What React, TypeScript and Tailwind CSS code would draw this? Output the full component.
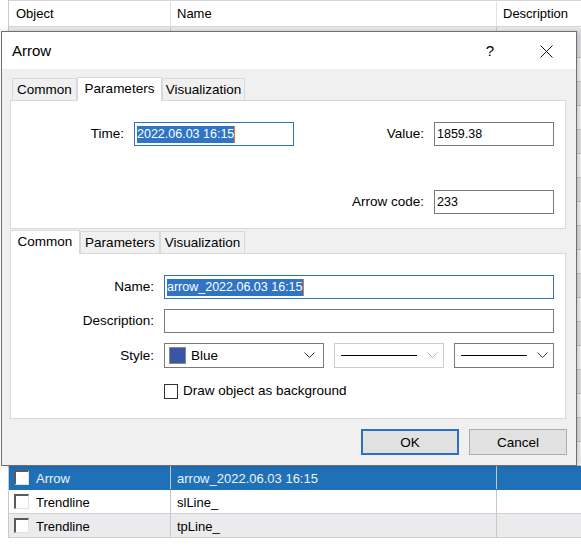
import React from 'react';

const Chevron = ({ light = false }: { light?: boolean }) => (
  <svg width="11" height="7" viewBox="0 0 11 7" className="shrink-0">
    <polyline points="0.5,0.5 5.5,5.5 10.5,0.5" fill="none" stroke={light ? '#b4b4b4' : '#3c3c3c'} strokeWidth="1" />
  </svg>
);

const ListCheck = () => (
  <div className="w-[15px] h-[15px] shrink-0 bg-white border-t-2 border-l-2 border-t-[#5a5a5a] border-l-[#5a5a5a] border-r border-b border-r-[#e2e2e2] border-b-[#e2e2e2]" />
);

const Tab = ({ label, active, w }: { label: string; active?: boolean; w: string }) => (
  <div
    className={`${w} flex items-center justify-center border border-b-0 ${
      active ? 'h-[24px] bg-white border-[#d9d9d9] relative z-10 -mb-px' : 'h-[22px] pt-[2px] bg-[#f0f0f0] border-[#d9d9d9]'
    }`}
  >
    {label}
  </div>
);

const Input = ({ w, value, focused }: { w: string; value?: string; focused?: boolean }) => (
  <div
    className={`${w} h-[24px] bg-white border flex items-center px-[2px] text-[12.5px] ${
      focused ? 'border-[#2b74c2]' : 'border-[#7a7a7a]'
    }`}
  >
    {value && (
      <span className={focused ? 'bg-[#3074c4] text-white leading-[17px] border-r border-r-[#e07b39]' : 'leading-[17px]'}>{value}</span>
    )}
  </div>
);

const rows = [
  ...Array.from({ length: 18 }, (_, i) => ({ obj: '', name: '', i })),
  { obj: 'Arrow', name: 'arrow_2022.06.03 16:15', i: 18, sel: true },
  { obj: 'Trendline', name: 'slLine_', i: 19 },
  { obj: 'Trendline', name: 'tpLine_', i: 20 },
];

export default function App() {
  return (
    <div className="relative w-[581px] h-[546px] bg-white overflow-hidden text-[13px] text-black font-['Liberation_Sans',Arial,sans-serif]">
      {/* Background list */}
      <div className="ml-[8px] border-l border-[#c9c9c9]">
        <div className="grid grid-cols-[162px_326px_1fr] h-[27px] pt-px border-t border-b border-[#d5d5d5] bg-white">
          <div className="pl-[7px] flex items-center border-r border-[#e2e2e2]">Object</div>
          <div className="pl-[6px] flex items-center border-r border-[#e2e2e2]">Name</div>
          <div className="pl-[6px] flex items-center">Description</div>
        </div>
        {rows.map((r, idx) => (
          <div
            key={idx}
            className={`grid grid-cols-[162px_326px_1fr] border-b ${idx === 0 ? 'h-[31px]' : 'h-[24px]'} ${
              r.sel
                ? 'bg-[#2070b8] text-[#eef3f9] border-[#2070b8]'
                : r.i % 2 === 0
                ? 'bg-[#ebebed] border-[#cfcfcf]'
                : 'bg-white border-[#cfcfcf]'
            }`}
          >
            <div className="flex items-center gap-[7px] pl-[5px] border-r border-[#c8c8c8]">
              {r.obj && <ListCheck />}
              <span className="pt-[3px]">{r.obj}</span>
            </div>
            <div className="flex items-center pl-[6px] pt-[3px] border-r border-[#c8c8c8]">{r.name}</div>
            <div />
          </div>
        ))}
      </div>

      {/* Dialog window */}
      <div className="absolute left-[1px] top-[31px] w-[576px] h-[435px] border border-[#6f6f6f] bg-[#f0f0f0] flex flex-col text-[13.5px] shadow-[3px_0_5px_rgba(0,0,0,0.2)]">
        <div className="h-[37px] bg-white flex items-center pl-[10px] pt-[2px] shrink-0">
          <span className="text-[15px]">Arrow</span>
          <span className="ml-auto text-[15px] mr-[46px]">?</span>
          <svg width="13" height="13" viewBox="0 0 13 13" className="mr-[23px]">
            <path d="M0.5 0.5 L12.5 12.5 M12.5 0.5 L0.5 12.5" stroke="#111" strokeWidth="1" />
          </svg>
        </div>

        <div className="pl-[8px] pr-[10px]">
          {/* Upper tab control */}
          <div className="flex items-end pt-[8px] pl-[2px]">
            <Tab label="Common" w="w-[65px]" />
            <Tab label="Parameters" w="w-[85px]" active />
            <Tab label="Visualization" w="w-[83px]" />
          </div>
          <div className="h-[129px] bg-white border border-[#d9d9d9] pt-[21px] pr-[11px]">
            <div className="flex items-center">
              <div className="w-[113px] text-right pt-px">Time:</div>
              <div className="ml-[10px]">
                <Input w="w-[160px]" value="2022.06.03 16:15" focused />
              </div>
              <div className="w-[130px] text-right pt-px">Value:</div>
              <div className="ml-[10px]">
                <Input w="w-[120px]" value="1859.38" />
              </div>
            </div>
            <div className="flex items-center justify-end mt-[44px]">
              <div className="text-right pt-px">Arrow code:</div>
              <div className="ml-[10px]">
                <Input w="w-[120px]" value="233" />
              </div>
            </div>
          </div>

          {/* Lower tab control */}
          <div className="flex items-end mt-px">
            <Tab label="Common" w="w-[70px]" active />
            <Tab label="Parameters" w="w-[80px]" />
            <Tab label="Visualization" w="w-[85px]" />
          </div>
          <div className="h-[166px] bg-white border border-[#d9d9d9] pt-[21px] pr-[11px] flex flex-col gap-[10px]">
            <div className="flex items-center">
              <div className="w-[143px] text-right pt-px">Name:</div>
              <div className="ml-[10px]">
                <Input w="w-[390px]" value="arrow_2022.06.03 16:15" focused />
              </div>
            </div>
            <div className="flex items-center">
              <div className="w-[143px] text-right pt-px">Description:</div>
              <div className="ml-[10px]">
                <Input w="w-[390px]" />
              </div>
            </div>
            <div className="flex items-center">
              <div className="w-[143px] text-right pt-px">Style:</div>
              <div className="ml-[10px] flex gap-[10px]">
                <div className="w-[160px] h-[25px] bg-white border border-[#7a7a7a] flex items-center pl-[4px] pr-[8px]">
                  <div className="w-[17px] h-[17px] bg-[#3a55a6] border border-[#8a8a8a]" />
                  <span className="ml-[5px] pt-px">Blue</span>
                  <span className="ml-auto"><Chevron /></span>
                </div>
                <div className="w-[110px] h-[25px] bg-white border border-[#cccccc] flex items-center pl-[6px] pr-[5px]">
                  <div className="w-[76px] h-px bg-black" />
                  <span className="ml-auto"><Chevron light /></span>
                </div>
                <div className="w-[100px] h-[25px] bg-white border border-[#7a7a7a] flex items-center pl-[6px] pr-[5px]">
                  <div className="w-[66px] h-px bg-black" />
                  <span className="ml-auto"><Chevron /></span>
                </div>
              </div>
            </div>
            <div className="flex items-center mt-[3px]">
              <div className="ml-[153px] w-[14px] h-[15px] bg-white border border-[#333]" />
              <span className="ml-[5px]">Draw object as background</span>
            </div>
          </div>

          {/* Buttons */}
          <div className="flex justify-end gap-[10px] mt-[10px] -mr-px">
            <button className="w-[98px] h-[26px] pt-[2px] bg-[#e1e1e1] border-2 border-[#2a72c4]">OK</button>
            <button className="w-[98px] h-[26px] pt-[2px] bg-[#e1e1e1] border border-[#adadad]">Cancel</button>
          </div>
        </div>
      </div>
    </div>
  );
}
